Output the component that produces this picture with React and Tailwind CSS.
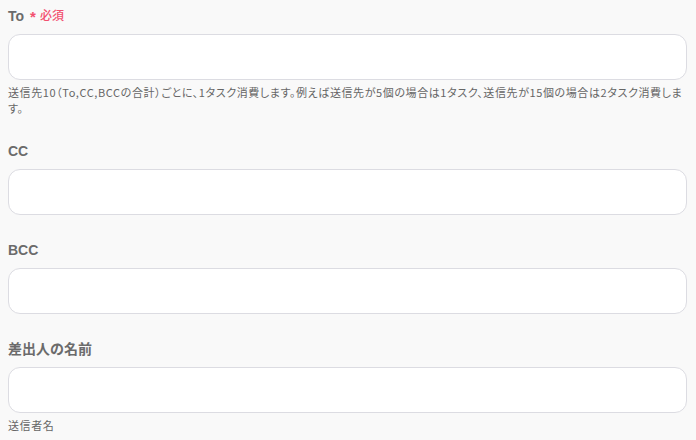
const font = {
  fontFamily: '"Liberation Sans", "Noto Sans CJK JP", sans-serif',
};

const helpFont = {
  fontFamily: '"Noto Sans CJK JP", sans-serif',
  fontFeatureSettings: '"palt"',
};

function Field({ label, required, help }) {
  return (
    <div className="flex flex-col">
      <div className="flex h-[16px] items-center gap-[6px]">
        <span className="text-[14px] font-bold leading-none text-[#6b6b6b]">{label}</span>
        {required && (
          <span className="flex items-center gap-[4px] text-[12px] font-medium leading-none text-[#f2506f]">
            <span className="text-[15px] font-bold">*</span>
            必須
          </span>
        )}
      </div>
      <input
        type="text"
        className="mt-[10px] h-[46px] w-full rounded-[12px] border border-[#dcdce2] bg-white px-3 text-sm outline-none"
      />
      {help && (
        <p className="mt-[4px] text-[11px] leading-[16px] tracking-[0.6px] text-[#666666]" style={helpFont}>
          {help}
        </p>
      )}
    </div>
  );
}

export default function App() {
  return (
    <div className="min-h-[440px] w-[696px] bg-[#f9f9f9] pl-[8px] pr-[9px] pt-[8px]" style={font}>
      <div className="flex flex-col gap-[27px]">
        <Field
          label="To"
          required
          help="送信先10（To,CC,BCCの合計）ごとに、1タスク消費します。例えば送信先が5個の場合は1タスク、送信先が15個の場合は2タスク消費します。"
        />
        <Field label="CC" />
        <Field label="BCC" />
        <Field label="差出人の名前" help="送信者名" />
      </div>
    </div>
  );
}
